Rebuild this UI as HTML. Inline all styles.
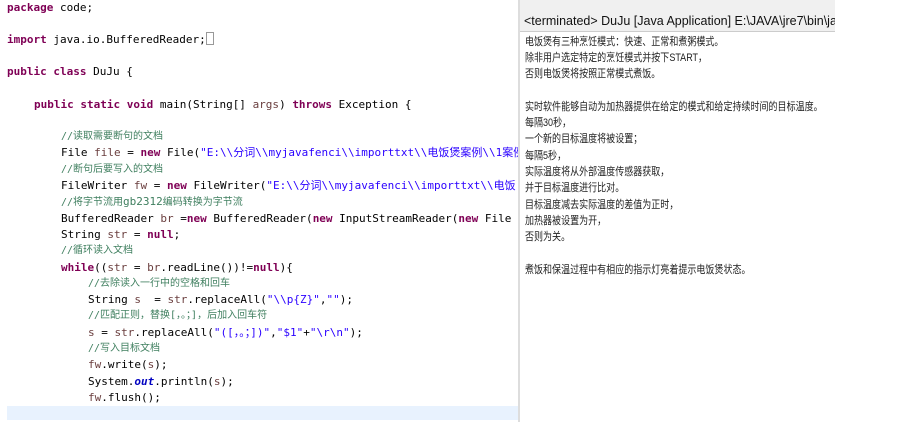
<!DOCTYPE html>
<html><head><meta charset="utf-8"><style>
body{margin:0;width:903px;height:422px;background:#fff;position:relative;overflow:hidden}
.code{position:absolute;left:7px;top:0;font-family:"DejaVu Sans Mono","Noto Sans CJK SC",monospace;font-size:11px;color:#000}
.l{position:absolute;white-space:pre;height:16px;line-height:16px}
.k{color:#7f0055;font-weight:bold}
.c{color:#3f7f5f;font-size:10px}
.s{color:#2a00ff}
.v{color:#6a3e3e}
.o{color:#0000c0;font-style:italic;font-weight:bold}
.hl{position:absolute;left:7px;top:406px;width:511px;height:14px;background:#e8f2fe}
.con{position:absolute;left:518px;top:0;width:315px;height:422px;border-left:2px solid #ddd;background:#fff;overflow:hidden}
.hd{position:absolute;left:0;top:0;width:315px;height:31px;background:#f0f0f0;border-bottom:1px solid #ccc}
.ht{position:absolute;left:4px;top:14px;font-family:"Liberation Sans",sans-serif;font-size:12.5px;white-space:nowrap;color:#111}
.cl{position:absolute;left:5px;font-family:"Liberation Sans","Noto Sans CJK SC",sans-serif;font-size:11px;white-space:pre;line-height:16px;color:#222;transform:scaleX(0.82);transform-origin:0 0}
</style></head><body>
<div class="hl"></div>
<div class="code">
<div class="l" style="top:0"><span class="k">package</span> code;</div>
<div class="l" style="top:32px"><span class="k">import</span> java.io.BufferedReader;<span style="display:inline-block;width:6px;height:11px;border:1px solid #999;vertical-align:-2px"></span></div>
<div class="l" style="top:64px"><span class="k">public class</span> DuJu {</div>
<div class="l" style="top:97px;left:27px"><span class="k">public static void</span> main(String[] <span class="v">args</span>) <span class="k">throws</span> Exception {</div>
<div class="l c" style="top:129px;left:54px">//读取需要断句的文档</div>
<div class="l" style="top:145px;left:54px">File <span class="v">file</span> = <span class="k">new</span> File(<span class="s">"E:\\分词\\myjavafenci\\importtxt\\电饭煲案例\\1案例</span></div>
<div class="l c" style="top:162px;left:54px">//断句后要写入的文档</div>
<div class="l" style="top:178px;left:54px">FileWriter <span class="v">fw</span> = <span class="k">new</span> FileWriter(<span class="s">"E:\\分词\\myjavafenci\\importtxt\\电饭</span></div>
<div class="l c" style="top:194px;left:54px">//将字节流用<span style="font-size:11px">gb2312</span>编码转换为字节流</div>
<div class="l" style="top:211px;left:54px">BufferedReader <span class="v">br</span> =<span class="k">new</span> BufferedReader(<span class="k">new</span> InputStreamReader(<span class="k">new</span> File</div>
<div class="l" style="top:227px;left:54px">String <span class="v">str</span> = <span class="k">null</span>;</div>
<div class="l c" style="top:243px;left:54px">//循环读入文档</div>
<div class="l" style="top:260px;left:54px"><span class="k">while</span>((<span class="v">str</span> = <span class="v">br</span>.readLine())!=<span class="k">null</span>){</div>
<div class="l c" style="top:276px;left:81px">//去除读入一行中的空格和回车</div>
<div class="l" style="top:292px;left:81px">String <span class="v">s</span>  = <span class="v">str</span>.replaceAll(<span class="s">"\\p{Z}"</span>,<span class="s">""</span>);</div>
<div class="l c" style="top:308px;left:81px">//匹配正则，替换[，。；]，后加入回车符</div>
<div class="l" style="top:325px;left:81px"><span class="v">s</span> = <span class="v">str</span>.replaceAll(<span class="s">"([，。；])"</span>,<span class="s">"$1"</span>+<span class="s">"\r\n"</span>);</div>
<div class="l c" style="top:341px;left:81px">//写入目标文档</div>
<div class="l" style="top:357px;left:81px"><span class="v">fw</span>.write(<span class="v">s</span>);</div>
<div class="l" style="top:374px;left:81px">System.<span class="o">out</span>.println(<span class="v">s</span>);</div>
<div class="l" style="top:390px;left:81px"><span class="v">fw</span>.flush();</div>
</div>
<div class="con">
<div class="hd"><div class="ht">&lt;terminated&gt; DuJu [Java Application] E:\JAVA\jre7\bin\jav</div></div>
<div class="cl" style="top:34px">电饭煲有三种烹饪模式：快速、正常和煮粥模式。</div>
<div class="cl" style="top:50px">除非用户选定特定的烹饪模式并按下START，</div>
<div class="cl" style="top:66px">否则电饭煲将按照正常模式煮饭。</div>
<div class="cl" style="top:99px">实时软件能够自动为加热器提供在给定的模式和给定持续时间的目标温度。</div>
<div class="cl" style="top:115px">每隔30秒，</div>
<div class="cl" style="top:131px">一个新的目标温度将被设置；</div>
<div class="cl" style="top:148px">每隔5秒，</div>
<div class="cl" style="top:164px">实际温度将从外部温度传感器获取，</div>
<div class="cl" style="top:180px">并于目标温度进行比对。</div>
<div class="cl" style="top:197px">目标温度减去实际温度的差值为正时，</div>
<div class="cl" style="top:213px">加热器被设置为开，</div>
<div class="cl" style="top:229px">否则为关。</div>
<div class="cl" style="top:262px">煮饭和保温过程中有相应的指示灯亮着提示电饭煲状态。</div>
</div>
</body></html>
